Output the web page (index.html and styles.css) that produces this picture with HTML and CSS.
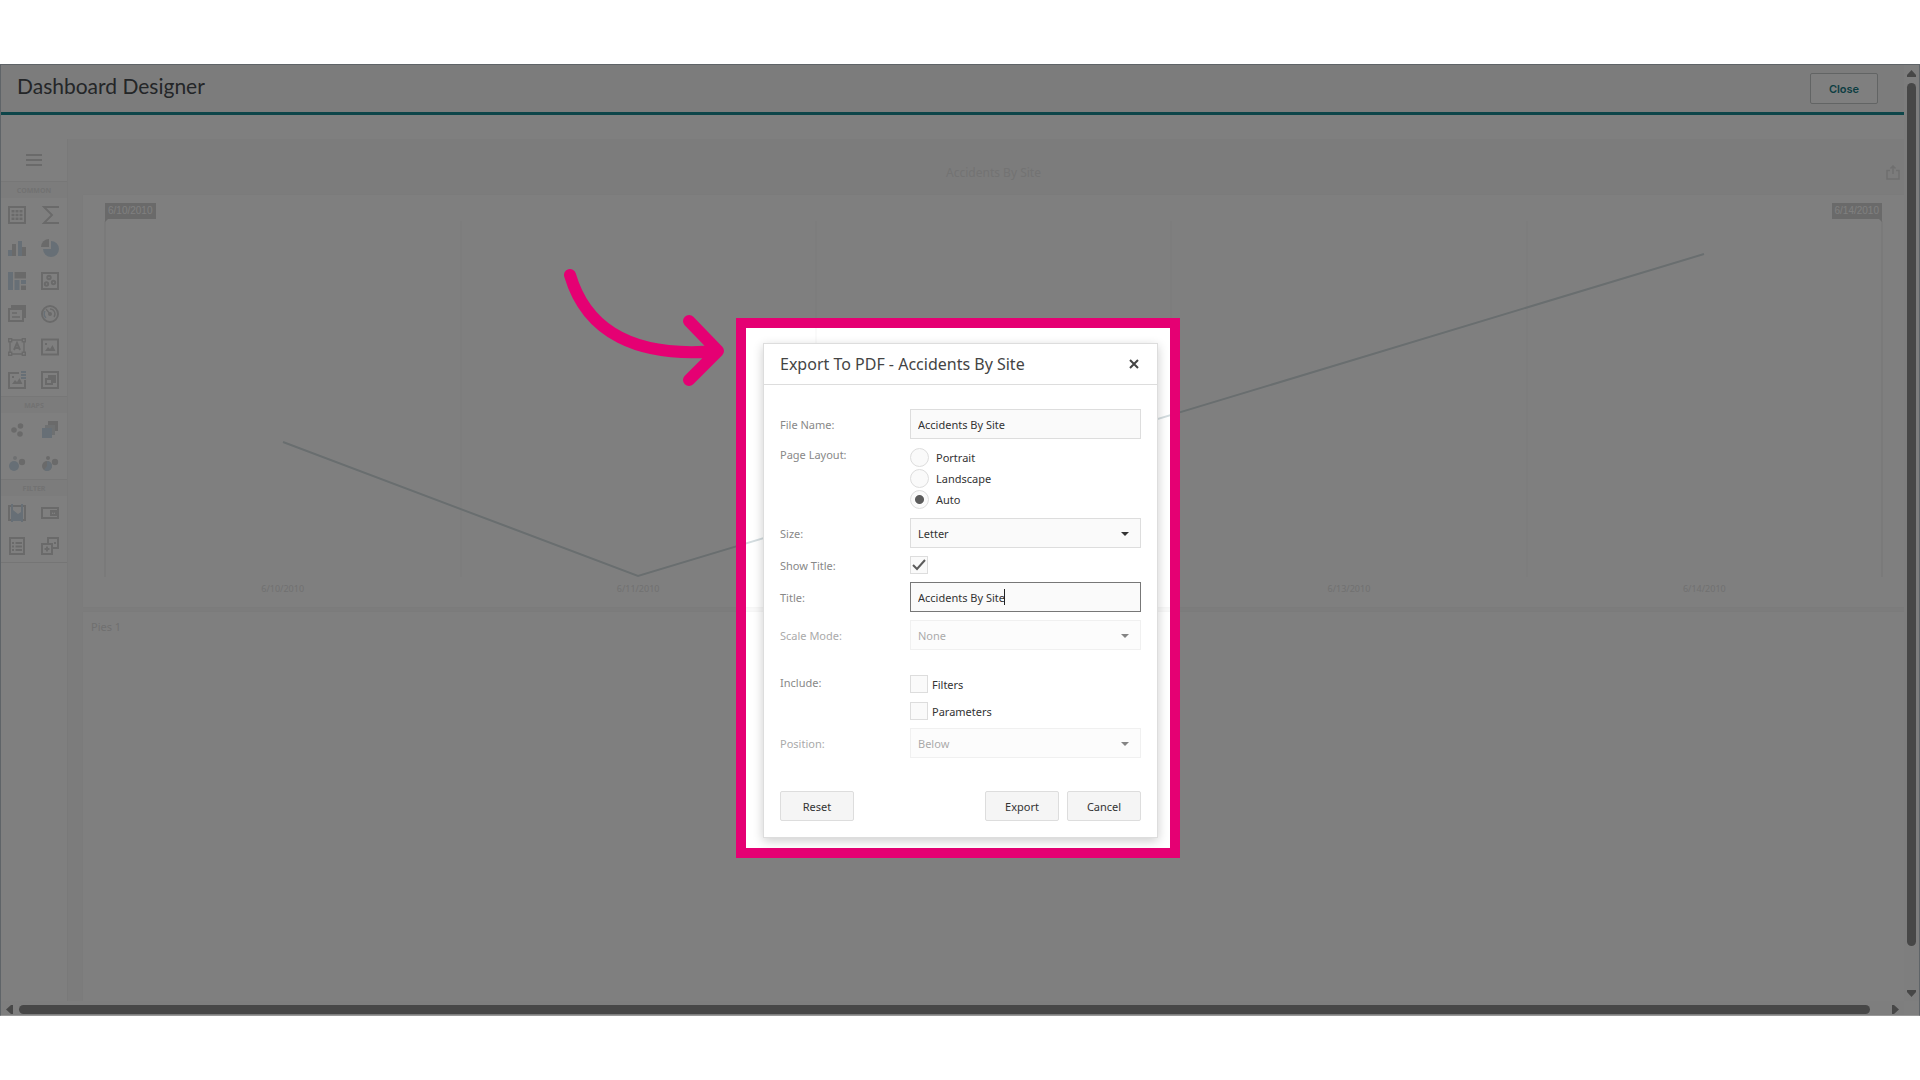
FILE: index.html
```html
<!DOCTYPE html>
<html lang="en">
<head>
  <meta charset="UTF-8" />
  <meta name="viewport" content="width=device-width, initial-scale=1.0"/>
  <title>Dashboard Designer</title>
  <link rel="stylesheet" href="styles.css">
</head>
<body>

<div class="screen">
  <div class="page">
    <header class="page-header">
      <h1>Dashboard Designer</h1>
      <button type="button" class="close-page">Close</button>
    </header>

    <div class="designer">
      <nav class="toolbox">
        <button type="button" class="menu-button" aria-label="Menu">
          <svg width="18" height="14" viewBox="0 0 18 14"><path class="line" d="M1 2h16M1 7h16M1 12h16"/></svg>
        </button>

        <h2>COMMON</h2>
        <div class="tools">
          <button type="button" aria-label="Grid"><svg viewBox="0 0 18 18"><path class="line" d="M1 1h16v16H1z"/><path class="fill" d="M3.500 4h3v2.500h-3zM7.500 4h3v2.500h-3zM11.500 4h3v2.500h-3zM3.500 7.700h3v2.500h-3zM7.500 7.700h3v2.500h-3zM11.500 7.700h3v2.500h-3zM3.500 11.500h3V14h-3zM7.500 11.500h3V14h-3zM11.500 11.500h3V14h-3z"/></svg></button>
          <button type="button" aria-label="Pivot"><svg viewBox="0 0 18 18"><path class="line" d="M18 1H3l8 8-8 8h15"/></svg></button>
          <button type="button" aria-label="Chart"><svg viewBox="0 0 18 18"><path class="blue" d="M0 11h4v6H0zM10 2h4v15h-4z"/><path class="fill" d="M4 5h4v12H4zM14 8h4v9h-4z"/></svg></button>
          <button type="button" aria-label="Pies"><svg viewBox="0 0 18 18"><path class="blue" d="M10 2a8 8 0 1 1-8 8h8z"/><path class="fill" d="M8 0v8H0a8 8 0 0 1 8-8z"/></svg></button>
          <button type="button" aria-label="Treemap"><svg viewBox="0 0 18 18"><path class="blue" d="M0 0h5v18H0zM6.500 8h5v10h-5zM13 8h5v4h-5z"/><path class="fill" d="M6.500 0H18v6.500H6.500zM13 13.500h5V18h-5z"/></svg></button>
          <button type="button" aria-label="Scatter chart"><svg viewBox="0 0 18 18"><path class="line" d="M1 1h16v16H1z"/><g class="line"><circle cx="8" cy="5.500" r="1.700"/><circle cx="5.500" cy="12" r="1.700"/><circle cx="12.500" cy="10.500" r="1.700"/></g></svg></button>
          <button type="button" aria-label="Cards"><svg viewBox="0 0 18 18"><path class="fill" d="M3 0h15v13h-2V3H3z"/><path class="line" d="M1 4h14v12H1z"/><path class="thin" d="M4 8h5M4 12h8"/></svg></button>
          <button type="button" aria-label="Gauges"><svg viewBox="0 0 18 18"><circle class="line" cx="9" cy="9" r="8"/><path class="thin" d="M5 4l4 5M9 4a5 5 0 0 1 4 8"/><path class="thin-blue" d="M4 6a6 6 0 0 0 1 7"/><circle class="fill" cx="9" cy="9" r="2"/></svg></button>
          <button type="button" aria-label="Text box"><svg viewBox="0 0 18 18"><path class="thin" d="M4 2h10M4 16h10M2 4v10M16 4v10M.7.7h3v3h-3zM14.300.7h3v3h-3zM.7 14.300h3v3h-3zM14.300 14.300h3v3h-3z"/><path class="line" d="M6 12l3-7 3 7M7 10h4"/></svg></button>
          <button type="button" aria-label="Image"><svg viewBox="0 0 18 18"><path class="line" d="M1 1.500h16v15H1z"/><path class="fill" d="M4 13l3-4 2 2 2.500-4 3 6zM4 5h2v2H4z"/></svg></button>
          <button type="button" aria-label="Bound image"><svg viewBox="0 0 18 18"><path class="line" d="M11 2H1v15h16V9"/><path class="fill" d="M4 13l3-4 2 2 2.500-4 3 6zM4 5h2v2H4z"/><path class="blue" d="M13 0h5v2h-5zM13 3h5v2h-5zM13 6h5v2h-5z"/></svg></button>
          <button type="button" aria-label="Group"><svg viewBox="0 0 18 18"><path class="line" d="M1 1h16v16H1zM5 8h6v5H5z"/><path class="fill" d="M7 4h8v8h-3V7H7z"/></svg></button>
        </div>

        <h2>MAPS</h2>
        <div class="tools">
          <button type="button" aria-label="Geo point map"><svg viewBox="0 0 18 18"><g class="fill"><circle cx="6" cy="9" r="2.800"/><circle cx="12.500" cy="5" r="2.800"/><circle cx="12" cy="13" r="2.800"/></g></svg></button>
          <button type="button" aria-label="Choropleth map"><svg viewBox="0 0 18 18"><path class="fill" d="M7 0h10v10H7z"/><path class="mid" d="M4 4h10v10H4z"/><path class="blue" d="M1 7h10v10H1z"/></svg></button>
          <button type="button" aria-label="Bubble map"><svg viewBox="0 0 18 18"><circle class="blue" cx="6" cy="12" r="5"/><circle class="fill" cx="14" cy="8" r="3.200"/><circle class="mid" cx="7" cy="4" r="2"/></svg></button>
          <button type="button" aria-label="Pie map"><svg viewBox="0 0 18 18"><circle class="fill" cx="6" cy="12" r="5"/><path class="blue" d="M6 12V7a5 5 0 1 1-3 9z"/><circle class="fill" cx="14" cy="8" r="3.200"/><circle class="fill" cx="7" cy="4" r="2"/></svg></button>
        </div>

        <h2>FILTER</h2>
        <div class="tools">
          <button type="button" aria-label="Range filter"><svg viewBox="0 0 18 18"><path class="line" d="M1 2h16v14H1z"/><path class="blue" d="M3 0h2v6l5 4 3-2V0h2v18h-2v-1H5v1H3z"/></svg></button>
          <button type="button" aria-label="Combo box"><svg viewBox="0 0 18 18"><path class="line" d="M1 4h16v10H1zM10 7h5v4h-5z"/><path class="fill" d="M11 8h3l-1.500 2z"/></svg></button>
          <button type="button" aria-label="List box"><svg viewBox="0 0 18 18"><path class="line" d="M2 1h14v16H2z"/><path class="line" d="M4 6h2M7.500 6H14M4 9.500h2M7.500 9.500H14M4 13h2M7.500 13H14"/></svg></button>
          <button type="button" aria-label="Tree view"><svg viewBox="0 0 18 18"><path class="line" d="M7 6V1h10v10h-5M1 7h10v10H1zM3.500 12h5M6 9.500v5M13 6h2"/></svg></button>
        </div>
      </nav>

      <main class="workspace">
        <div class="dashboard-title">
          <span>Accidents By Site</span>
          <button type="button" class="share" aria-label="Export">
            <svg width="14" height="15" viewBox="0 0 14 15"><path class="line" d="M4 5.500H1V14h12V5.500h-3M7 9V2M4.500 3.500L7 1l2.500 2.500"/></svg>
          </button>
        </div>

        <section class="panel range">
          <div class="range-markers">
            <span class="marker start">6/10/2010</span>
            <span class="marker end">6/14/2010</span>
          </div>
          <svg class="plot" viewBox="0 0 1777 356" preserveAspectRatio="none">
            <path class="edge" d="M0 0V356M1777 0V356"/>
            <path class="gridline" d="M356 0V356M711 0V356M1066 0V356M1422 0V356"/>
            <polyline class="series" points="178,221 533,355 1599,33"/>
          </svg>
          <div class="axis">
            <span>6/10/2010</span>
            <span>6/11/2010</span>
            <span>6/12/2010</span>
            <span>6/13/2010</span>
            <span>6/14/2010</span>
          </div>
        </section>

        <section class="panel pies">
          <h3>Pies 1</h3>
        </section>
      </main>
    </div>
  </div>

  <div class="scroll vertical">
    <svg width="9" height="7" viewBox="0 0 9 7"><path d="M4.500 0L9 5v2H0V5z"/></svg>
    <div class="thumb"></div>
    <svg width="9" height="7" viewBox="0 0 9 7"><path d="M0 0h9v2L4.500 7 0 2z"/></svg>
  </div>
  <div class="scroll horizontal">
    <svg width="7" height="9" viewBox="0 0 7 9"><path d="M0 4.500L5 0h2v9H5z"/></svg>
    <div class="thumb"></div>
    <svg width="7" height="9" viewBox="0 0 7 9"><path d="M7 4.500L2 0H0v9h2z"/></svg>
  </div>

  <!-- the frame's own shadow dims everything outside it -->
  <div class="spotlight">
    <svg class="arrow" width="164" height="120" viewBox="0 0 164 120"><path d="M8 8C25 66 76 91 155 84M127 54l29 30-29 29"/></svg>

    <form class="dialog" onsubmit="return false">
      <div class="dialog-title">
        <h2>Export To PDF - Accidents By Site</h2>
        <button type="button" class="dialog-close" aria-label="Close dialog">
          <svg width="10" height="10" viewBox="0 0 10 10"><path d="M1 1l8 8M9 1L1 9"/></svg>
        </button>
      </div>

      <div class="fields">
        <label for="fileName">File Name:</label>
        <input type="text" class="box" id="fileName" value="Accidents By Site">

        <span class="caption" id="layoutLabel">Page Layout:</span>
        <div class="radios" role="radiogroup" aria-labelledby="layoutLabel">
          <label><input type="radio" name="layout"> Portrait</label>
          <label><input type="radio" name="layout"> Landscape</label>
          <label><input type="radio" name="layout" checked> Auto</label>
        </div>

        <label for="size">Size:</label>
        <div class="dropdown">
          <select class="box" id="size"><option>Letter</option></select>
        </div>

        <label for="showTitle">Show Title:</label>
        <div class="check">
          <input type="checkbox" id="showTitle" checked>
          <svg width="14" height="12" viewBox="0 0 14 12"><path d="M1 6l4 4 8-9"/></svg>
        </div>

        <label for="titleText">Title:</label>
        <div class="editing">
          <input type="text" class="box active" id="titleText" value="Accidents By Site">
          <span class="caret"></span>
        </div>

        <label for="scaleMode" class="off">Scale Mode:</label>
        <div class="dropdown off">
          <select class="box" id="scaleMode" disabled><option>None</option></select>
        </div>

        <span class="caption include" id="includeLabel">Include:</span>
        <div class="checks include" role="group" aria-labelledby="includeLabel">
          <label><input type="checkbox"> Filters</label>
          <label><input type="checkbox"> Parameters</label>
        </div>

        <label for="position" class="off">Position:</label>
        <div class="dropdown off">
          <select class="box" id="position" disabled><option>Below</option></select>
        </div>
      </div>

      <div class="actions">
        <button type="reset">Reset</button>
        <button type="submit">Export</button>
        <button type="button">Cancel</button>
      </div>
    </form>
  </div>
</div>

</body>
</html>
```

FILE: styles.css
```css
* {
  box-sizing: border-box;
}
body {
  margin: 0;
  padding: 64px 0;
  background: #fff;
  font-family: "Noto Sans", sans-serif;
  font-size: 11px;
}
h1, h2, h3 {
  margin: 0;
  font-weight: normal;
}
button {
  padding: 0;
  border: none;
  background: none;
  font-family: inherit;
  font-size: inherit;
  cursor: pointer;
}
svg {
  display: block;
}

.screen {
  position: relative;
  display: grid;
  grid-template-columns: 1fr 15px;
  grid-template-rows: 1fr 14px;
  min-height: calc(100vh - 128px);
  border: 1px solid #5f6468;
  border-bottom-color: #999;
  overflow: hidden;
}
.page {
  display: flex;
  flex-direction: column;
}
.page-header {
  display: flex;
  justify-content: space-between;
  align-items: flex-start;
  height: 50px;
  padding: 8px 26px 0 16px;
  background: #f8f8f8;
  border-bottom: 3px solid #1a8a92;
}
.page-header h1 {
  font-family: Lato, sans-serif;
  font-size: 21px;
  line-height: 26px;
  color: #484c50;
}
.close-page {
  width: 68px;
  height: 31px;
  background: #fff;
  border: 1px solid #c4c8c8;
  border-radius: 2px;
  font-family: Inter, sans-serif;
  font-size: 11px;
  font-weight: 600;
  color: #1a7d85;
}

.designer {
  display: flex;
  flex: 1;
  margin-top: 24px;
}

/* toolbox */
.toolbox {
  width: 67px;
  border-right: 1px solid #f2f2f2;
}
.menu-button {
  display: flex;
  justify-content: center;
  align-items: center;
  width: 100%;
  height: 42px;
}
.toolbox h2 {
  height: 17px;
  border-top: 1px solid #efefef;
  background: #f9f9f9;
  font-size: 7px;
  font-weight: bold;
  line-height: 17px;
  text-align: center;
  color: #e4e4e4;
}
.tools {
  display: grid;
  grid-template-columns: 32px 34px;
  grid-auto-rows: 33px;
}
.tools:last-child {
  border-bottom: 1px solid #ebebeb;
}
.tools button {
  display: flex;
  justify-content: center;
  align-items: center;
}
.tools svg {
  width: 18px;
  height: 18px;
}
.line, .thin, .thin-blue {
  fill: none;
  stroke: #d5d5d5;
  stroke-width: 2;
}
.thin, .thin-blue {
  stroke-width: 1.4;
}
.thin-blue {
  stroke: #cfdfec;
}
.fill {
  fill: #d5d5d5;
}
.mid {
  fill: #dde0e3;
}
.blue {
  fill: #cfdfec;
}

/* dashboard */
.workspace {
  display: flex;
  flex: 1;
  flex-direction: column;
  gap: 5px;
  padding-left: 15px;
  background: #f9f9f9;
}
.dashboard-title {
  position: relative;
  display: flex;
  justify-content: center;
  align-items: center;
  height: 56px;
  margin-bottom: -5px;
  padding-top: 10px;
  font-size: 12px;
  color: #e6e6e6;
}
.share {
  position: absolute;
  right: 4px;
  top: 26px;
}
.share .line {
  stroke: #dedede;
  stroke-width: 1.5;
}
.panel {
  background: #fff;
  box-shadow: 0 0 2px #f0f0f0;
}
.range {
  height: 412px;
  padding: 8px 22px 0;
}
.range-markers {
  display: flex;
  justify-content: space-between;
  height: 18px;
}
.marker {
  position: relative;
  height: 16px;
  padding: 0 3px;
  background: #d4d4d4;
  font-family: "Liberation Sans", sans-serif;
  font-size: 10px;
  line-height: 16px;
  color: #fff;
}
.marker::after {
  content: "";
  position: absolute;
  top: 16px;
  border-top: 3px solid #d4d4d4;
}
.marker.start::after {
  left: 0;
  border-right: 3px solid transparent;
}
.marker.end::after {
  right: 0;
  border-left: 3px solid transparent;
}
.plot {
  width: 100%;
  height: 356px;
  overflow: visible;
}
.plot * {
  fill: none;
  vector-effect: non-scaling-stroke;
}
.edge {
  stroke: #eaeaea;
}
.gridline {
  stroke: #f5f5f5;
}
.series {
  stroke: #d3dcdf;
  stroke-width: 2;
}
.axis {
  display: flex;
  padding-top: 5px;
  font-size: 9px;
  line-height: 14px;
  color: #e2e2e2;
}
.axis span {
  flex: 1;
  text-align: center;
}
.pies {
  flex: 1;
  padding: 6px 8px;
}
.pies h3 {
  font-size: 11px;
  line-height: 18px;
  color: #e0e0e0;
}

/* scroll bars */
.scroll {
  display: flex;
  align-items: center;
  background: #fcfcfc;
}
.scroll svg {
  fill: #8e8e8e;
}
.thumb {
  flex: 1;
  border-radius: 5px;
  background: #8e8e8e;
}
.vertical {
  flex-direction: column;
  padding: 5px 0 4px;
}
.vertical .thumb {
  width: 9px;
  margin: 6px 0 44px;
}
.horizontal {
  padding: 2px 5px 0;
}
.horizontal .thumb {
  height: 9px;
  margin: 0 22px 0 6px;
}

/* highlighted dialog */
.spotlight {
  position: absolute;
  top: 253px;
  left: calc(50% - 224px);
  width: 444px;
  padding: 15px 12px 10px 17px;
  border: 10px solid #e50073;
  box-shadow: 0 0 0 2000px rgba(0, 0, 0, 0.5);
}
.arrow {
  position: absolute;
  left: -184px;
  top: -61px;
  fill: none;
  stroke: #e50073;
  stroke-width: 12;
  stroke-linecap: round;
  stroke-linejoin: round;
}
.dialog {
  background: #fff;
  border: 1px solid #ddd;
  box-shadow: 0 3px 10px rgba(0, 0, 0, 0.2);
  color: #333;
}
.dialog-title {
  display: flex;
  justify-content: space-between;
  align-items: center;
  height: 41px;
  padding: 0 18px 0 16px;
  border-bottom: 1px solid #ddd;
}
.dialog-title h2 {
  font-size: 16px;
  color: #444;
}
.dialog-close path {
  stroke: #444;
  stroke-width: 2;
}
.fields {
  display: grid;
  grid-template-columns: 130px 1fr;
  row-gap: 8px;
  align-items: center;
  padding: 24px 16px 0;
}
.fields > label, .caption {
  color: #888;
}
.fields > label.off {
  color: #aaa;
}
.caption {
  align-self: start;
}
.box {
  display: block;
  width: 100%;
  height: 30px;
  padding: 0 7px;
  appearance: none;
  background: #fafafa;
  border: 1px solid #ddd;
  border-radius: 0;
  outline: none;
  font-family: inherit;
  font-size: inherit;
  color: #333;
}
.box.active {
  border-color: #777;
}
.radios label {
  display: flex;
  align-items: center;
  gap: 7px;
  height: 21px;
}
.radios input, .check input, .checks input {
  width: 19px;
  height: 19px;
  margin: 0;
  appearance: none;
  background: #fafafa;
  border: 1px solid #ddd;
}
.radios input {
  border-radius: 50%;
}
.radios input:checked {
  background: radial-gradient(circle, #5c5c5c 4px, #fafafa 5px);
}
.dropdown, .check, .editing {
  position: relative;
}
.dropdown::after {
  content: "";
  position: absolute;
  right: 12px;
  top: 14px;
  border: 4px solid transparent;
  border-top-color: #333;
  border-bottom: none;
  pointer-events: none;
}
.dropdown.off {
  opacity: 0.6;
}
.check input, .checks input {
  display: block;
  width: 18px;
  height: 18px;
}
.check svg {
  position: absolute;
  left: 2px;
  top: 3px;
  fill: none;
  stroke: #5c5c5c;
  stroke-width: 2;
  pointer-events: none;
}
.caret {
  position: absolute;
  left: 94px;
  top: 7px;
  width: 1px;
  height: 16px;
  background: #222;
}
.checks {
  display: flex;
  flex-direction: column;
  gap: 9px;
}
.checks label {
  display: flex;
  align-items: center;
  gap: 4px;
  height: 18px;
}
.include {
  margin-top: 17px;
}
.actions {
  display: flex;
  gap: 8px;
  padding: 33px 16px 16px;
}
.actions button {
  width: 74px;
  height: 30px;
  background: #f5f5f5;
  border: 1px solid #ddd;
  border-radius: 2px;
  color: #333;
}
.actions button:first-child {
  margin-right: auto;
}
```
